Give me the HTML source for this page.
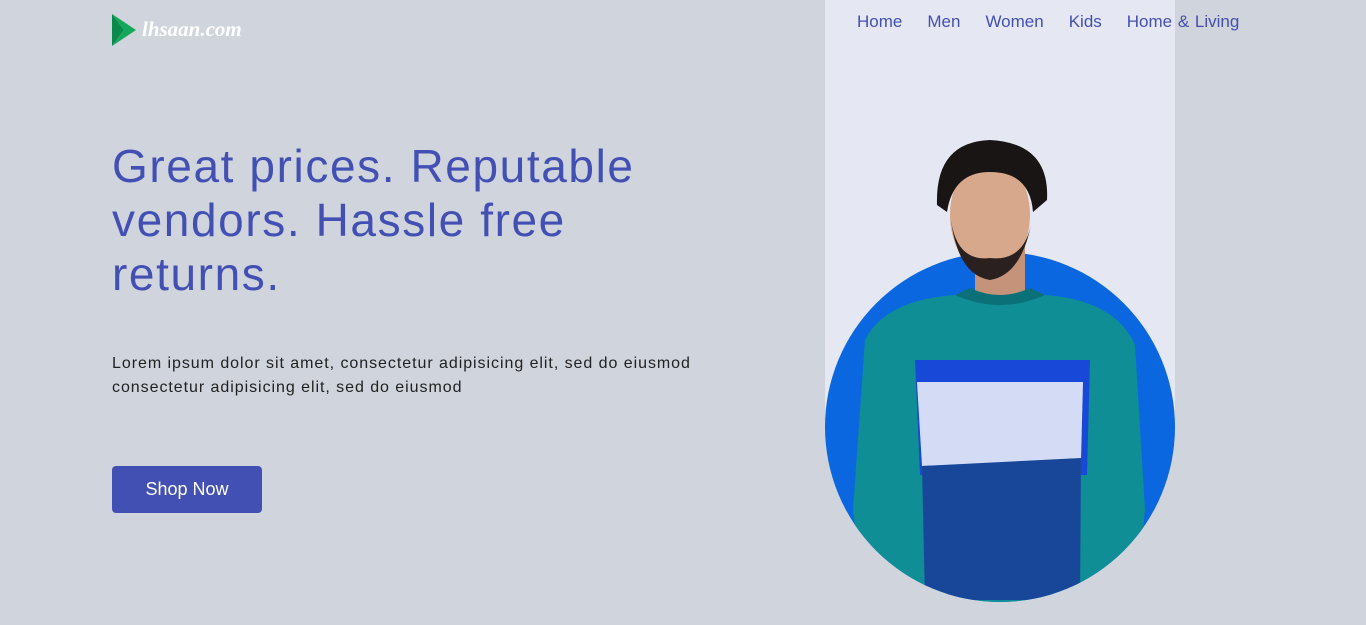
<!DOCTYPE html>
<html><head><style>
body{margin:0;width:1366px;height:625px;background:#d0d4dc;font-family:"Liberation Sans",sans-serif;position:relative;overflow:hidden}
.panel{position:absolute;left:825px;top:0;width:350px;height:430px;background:#e5e7f3}
nav{position:absolute;top:12px;left:857px;font-size:17px;color:#4450b0;word-spacing:1px;white-space:nowrap}
nav span{margin-right:25px}
h1{position:absolute;left:112px;top:139px;margin:0;font-weight:normal;font-size:46px;line-height:54px;color:#4350b3;width:600px;letter-spacing:1.6px}
p{position:absolute;left:112px;top:352px;margin:0;font-size:16px;line-height:24px;color:#222;letter-spacing:0.95px;white-space:nowrap}
.btn{position:absolute;left:112px;top:466px;width:150px;height:47px;background:#4350b3;color:#fff;border-radius:4px;font-size:18px;line-height:47px;text-align:center}
.logo{position:absolute;left:112px;top:14px}
.lt{position:absolute;left:142px;top:17px;color:#fff;font-family:"Liberation Serif",serif;font-style:italic;font-weight:bold;font-size:21px}
</style></head><body>
<div class="panel"></div>
<svg class="logo" width="24" height="32"><polygon points="0,0 12,16 0,32" fill="#0a8a4a"/><polygon points="0,0 24,16 0,32 12,16" fill="#16a85a"/></svg>
<div class="lt">lhsaan.com</div>
<nav><span>Home</span><span>Men</span><span>Women</span><span>Kids</span><span>Home &amp; Living</span></nav>
<h1>Great prices. Reputable vendors. Hassle free returns.</h1>
<p>Lorem ipsum dolor sit amet, consectetur adipisicing elit, sed do eiusmod<br>consectetur adipisicing elit, sed do eiusmod</p>
<div class="btn">Shop Now</div>
<svg style="position:absolute;left:825px;top:130px" width="350" height="475">
<defs><clipPath id="c"><rect x="90" y="0" width="170" height="200"/><circle cx="175" cy="297" r="175"/></clipPath></defs>
<circle cx="175" cy="297" r="175" fill="#0a67e0"/>
<g clip-path="url(#c)">
<rect x="150" y="110" width="50" height="60" fill="#c4937a"/>
<path d="M40 210 Q60 170 130 165 L220 165 Q290 170 310 215 L320 380 L310 480 L40 480 L28 380 Z" fill="#0f8e96"/>
<path d="M90 230 L265 230 L262 345 L95 345 Z" fill="#1748d8"/>
<path d="M92 252 L258 252 L256 330 L97 336 Z" fill="#d4dcf5"/>
<path d="M97 336 L256 328 L255 470 L100 470 Z" fill="#18479a"/>
<path d="M130 165 Q175 185 220 165 L205 158 Q175 172 145 158 Z" fill="#0c7078"/>
<ellipse cx="165" cy="85" rx="40" ry="58" fill="#d8a88c"/>
<path d="M126 90 Q133 145 165 150 Q197 145 207 90 Q200 132 165 128 Q132 132 126 90 Z" fill="#2a2020"/>
<path d="M112 75 Q110 12 165 10 Q225 13 222 70 L208 82 Q205 42 165 42 Q128 42 122 82 Z" fill="#1a1515"/>
</g>
</svg>
</body></html>
